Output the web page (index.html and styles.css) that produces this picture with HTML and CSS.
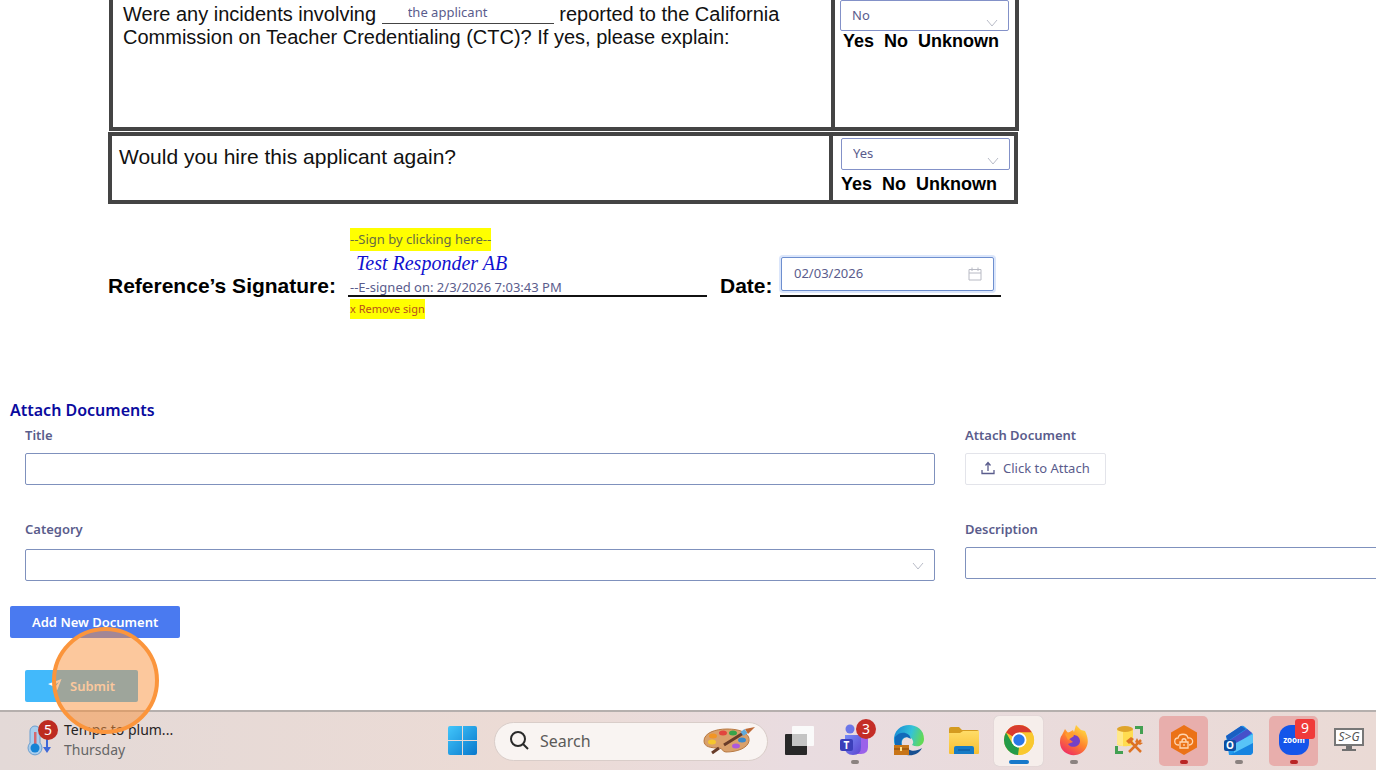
FILE: index.html
```html
<!DOCTYPE html>
<html lang="en">
<head>
<meta charset="utf-8">
<title>Reference Form</title>
<link rel="stylesheet" href="styles.css">
</head>
<body>
<main class="page">
  <section class="document">
    <div class="row row-first">
      <div class="question">
        <label for="who">Were any incidents involving</label>
        <input class="blank" id="who" type="text" value="the applicant">
        reported to the California<br>Commission on Teacher Credentialing (CTC)? If yes, please explain:
      </div>
      <div class="answer">
        <div class="select-wrap">
          <select class="control" aria-label="Incidents reported"><option>No</option><option>Yes</option><option>Unknown</option></select>
          <svg class="chevron chevron-low" viewBox="0 0 12 8"><path d="M1 1l5 6 5-6"/></svg>
        </div>
        <p class="choices"><span>Yes</span><span>No</span><span>Unknown</span></p>
      </div>
    </div>
    <div class="row row-second">
      <label class="question question-large" for="hire">Would you hire this applicant again?</label>
      <div class="answer">
        <div class="select-wrap">
          <select class="control" id="hire"><option>Yes</option><option>No</option><option>Unknown</option></select>
          <svg class="chevron chevron-low" viewBox="0 0 12 8"><path d="M1 1l5 6 5-6"/></svg>
        </div>
        <p class="choices"><span>Yes</span><span>No</span><span>Unknown</span></p>
      </div>
    </div>
    <div class="signing">
      <span class="sign-label">Reference’s Signature:</span>
      <div class="signature">
        <div class="signature-line">
          <button class="mark" type="button">--Sign by clicking here--</button>
          <span class="script">Test Responder AB</span>
          <span class="stamp">--E-signed on: 2/3/2026 7:03:43 PM</span>
        </div>
        <button class="mark mark-remove" type="button">x Remove sign</button>
      </div>
      <label class="sign-label date-label" for="date">Date:</label>
      <div class="date-line">
        <div class="date-box">
          <input id="date" class="date-input" type="text" value="02/03/2026">
          <svg class="calendar" viewBox="0 0 14 14"><path d="M1 2.500h12v10.500H1zM1 6h12M4 .5v3.500M10 .5v3.500"/></svg>
        </div>
      </div>
    </div>
  </section>

  <section class="attach">
    <h2 class="heading">Attach Documents</h2>
    <div class="fields">
      <div class="field">
        <label for="title">Title</label>
        <input class="control" id="title" type="text">
      </div>
      <div class="field">
        <label for="attach">Attach Document</label>
        <button class="upload" id="attach" type="button">
          <svg class="upload-icon" viewBox="0 0 14 14"><path d="M1 9v3.500h12V9M7 10V2M4.500 4.500L7 1.500l2.500 3"/></svg>Click to Attach
        </button>
      </div>
      <div class="field field-category">
        <label for="category">Category</label>
        <div class="select-wrap">
          <select class="control" id="category"><option></option></select>
          <svg class="chevron" viewBox="0 0 12 8"><path d="M1 1l5 6 5-6"/></svg>
        </div>
      </div>
      <div class="field">
        <label for="description">Description</label>
        <input class="control" id="description" type="text">
      </div>
    </div>
    <button class="button add" type="button">Add New Document</button>
    <div class="submit-wrap">
      <button class="button submit" type="submit">
        <svg class="send" viewBox="0 0 14 14"><path d="M13.500 0L0 5l4.500 2L11 3 7 8v6l2.500-3.500z" fill="#fff"/></svg>Submit
      </button>
      <span class="pointer"></span>
    </div>
  </section>
</main>

<footer class="taskbar">
  <button class="weather" type="button">
    <svg class="weather-icon" viewBox="0 0 32 40">
      <path d="M4 11a5 5 0 0 1 10 0v12a7 7 0 1 1-10 0z" fill="#a9cdec" stroke="#6b9fd0"/>
      <path d="M8 12h2.500v14H8z" fill="#d5686f"/><circle cx="9" cy="28" r="4.500" fill="#1583d5"/>
      <path d="M20 18v9h-3l4 6 4-6h-3v-9z" fill="#3e68d8"/>
      <circle cx="22" cy="10" r="10" fill="#bd2b20"/><text x="22" y="15" text-anchor="middle" font-size="14" fill="#fff">5</text>
    </svg>
    <span class="weather-text"><span>Temps to plum...</span><span class="weather-day">Thursday</span></span>
  </button>

  <div class="apps">
    <button class="app app-start" type="button" aria-label="Start">
      <svg viewBox="0 0 49 50"><defs><linearGradient id="win" x2="1" y2="1"><stop stop-color="#42c6fb"/><stop offset="1" stop-color="#0878cc"/></linearGradient></defs>
      <path d="M10 12q0-2 2-2h12v14H10zM25 10h12q2 0 2 2v12H25zM10 25h14v14H12q-2 0-2-2zM25 25h14v12q0 2-2 2H25z" fill="url(#win)"/></svg>
    </button>
    <label class="search">
      <svg class="search-icon" viewBox="0 0 20 20"><circle cx="9" cy="8" r="7"/><path d="M14 13l5 5"/></svg>
      <input class="search-input" type="text" placeholder="Search" aria-label="Search">
      <svg class="palette" viewBox="0 0 52 28">
        <path d="M1 14C1 6 12 2 24 2c13 0 23 4 22 12-1 7-12 11-23 11-4 0-3-4-7-4C8 21 1 20 1 14z" fill="#d9a06b" stroke="#b87942"/>
        <ellipse cx="20" cy="6" rx="4" ry="2.500" fill="#e2453e"/><ellipse cx="30" cy="6" rx="4" ry="2.500" fill="#37a34a"/><ellipse cx="10" cy="9" rx="4" ry="2.500" fill="#f29524"/><ellipse cx="9" cy="15" rx="4" ry="2.500" fill="#f6c62e"/><ellipse cx="39" cy="13" rx="4" ry="2.500" fill="#3989cc"/><ellipse cx="33" cy="19" rx="4" ry="2.500" fill="#ad58dc"/>
        <path d="M9 26l7-5M21 18L42 5" stroke="#693c29" stroke-width="3"/><path d="M39 7l4-3" stroke="#60a9db" stroke-width="5"/><path d="M42 2l10-2-7 7z" fill="#bd6935"/>
      </svg>
    </label>
    <button class="app" type="button" aria-label="Task view">
      <svg viewBox="0 0 49 50"><rect x="11" y="18" width="22" height="21" rx="1" fill="#282828"/><rect x="18" y="10" width="22" height="20" rx="1" fill="#fafafa"/><path d="M18 18h15v12H18z" fill="#c4c4c4"/></svg>
    </button>
    <button class="app" type="button" aria-label="Teams">
      <svg viewBox="0 0 49 50"><defs><linearGradient id="tm" x2="1" y2="1"><stop stop-color="#788cf6"/><stop offset="1" stop-color="#5a45d0"/></linearGradient></defs>
      <circle cx="21" cy="13" r="4.500" fill="#6b76e8"/><path d="M29 19h10v12q0 7-7 7h-5z" fill="#9b62ea"/><path d="M16 19h16v12q0 8-8 8t-8-8z" fill="url(#tm)"/>
      <rect x="11" y="23" width="13" height="12" rx="2" fill="#3c3fba"/><text x="17.500" y="33" text-anchor="middle" font-size="10" font-weight="700" fill="#fff">T</text>
      <circle cx="37" cy="13" r="10" fill="#c42d27"/><text x="37" y="18" text-anchor="middle" font-size="14" fill="#fff">3</text><rect x="22" y="44" width="8" height="4" rx="2" fill="#8b8280"/></svg>
    </button>
    <button class="app" type="button" aria-label="Edge">
      <svg viewBox="0 0 49 50"><defs><linearGradient id="ed" x2="1" y2=".3"><stop stop-color="#1585d5"/><stop offset=".6" stop-color="#34c2d8"/><stop offset="1" stop-color="#62d956"/></linearGradient></defs>
      <path d="M10 26C8 4 40 4 40 23c0 7-7 9-12 6 3-3 0-8-4-8-8 0-8 10-2 16-7-1-11-5-12-11z" fill="url(#ed)"/><path d="M11 21c5-7 15-5 16 2-8-5-12 2-8 9l-8-3z" fill="#1169b9"/><path d="M24 33c4 3 9 2 14-1-3 6-9 8-15 7z" fill="#174f91"/>
      <rect x="10" y="29" width="15" height="10" fill="#c87518"/><path d="M10 33h15" stroke="#834609"/><path d="M17 31v4" stroke="#ffe18b" stroke-width="2"/></svg>
    </button>
    <button class="app" type="button" aria-label="File Explorer">
      <svg viewBox="0 0 49 50"><defs><linearGradient id="fo" x2="0" y2="1"><stop stop-color="#ffdc68"/><stop offset="1" stop-color="#f7bf31"/></linearGradient></defs><path d="M10 13q0-2 2-2h8l3 3h15q2 0 2 2v3H10z" fill="#d49b20"/><path d="M10 17h11l3-2h16v22q0 1-1 1H11q-1 0-1-1z" fill="url(#fo)"/><path d="M15 38v-6q0-2 2-2h16q2 0 2 2v6z" fill="#167bc5"/><path d="M19 34h12" stroke="#0b5293"/></svg>
    </button>
    <button class="app app-active" type="button" aria-label="Chrome">
      <svg viewBox="0 0 49 50"><circle cx="25" cy="24" r="15" fill="#f9c82f"/><path d="M25 24L12 16.500A15 15 0 0 1 38 16.500H25z" fill="#d83b2e"/><path d="M12 16.500l6.500 11.250L25 31.500l-1 7.500A15 15 0 0 1 12 16.500z" fill="#249b49"/><path d="M38 16.500H25L31.500 28 25 39A15 15 0 0 0 38 16.500z" fill="#f9c82f"/><circle cx="25" cy="24" r="7.500" fill="#fff"/><circle cx="25" cy="24" r="5.700" fill="#2a78e8"/><rect x="15" y="44" width="20" height="4" rx="2" fill="#1678ca"/></svg>
    </button>
    <button class="app" type="button" aria-label="Firefox">
      <svg viewBox="0 0 49 50"><defs><linearGradient id="ff" x1=".8" x2=".2" y2="1"><stop stop-color="#ffe443"/><stop offset=".5" stop-color="#ff842c"/><stop offset="1" stop-color="#ee2668"/></linearGradient></defs><path d="M13 19l3-6 3 4 5-3 1 2 2-7 5 5 4 1c3 6 4 12 1 17-7 12-25 8-26-5 0-3 0-6 2-8z" fill="url(#ff)"/><path d="M19 22c2-5 12-4 12 3 0 6-9 8-12 3l5-2z" fill="#7541c8"/><path d="M16 18c3-3 8-1 9 2l-6 4z" fill="#ff9b30"/><rect x="21" y="44" width="8" height="4" rx="2" fill="#8b8280"/></svg>
    </button>
    <button class="app" type="button" aria-label="Database tools">
      <svg viewBox="0 0 49 50"><path d="M13 13v15c0 3 16 3 16 0V13z" fill="#ffdc50"/><path d="M13 13v15q2 2 6 2V13z" fill="#ffe98a"/><ellipse cx="21" cy="13" rx="8" ry="3" fill="#dfa42b"/><path d="M31 11.500h6.500V18M12.500 30v6.500H19" fill="none" stroke="#43a052" stroke-width="3"/><path d="M25 36l12-12M26 25l11 11" stroke="#dd7324" stroke-width="2.500"/><path d="M22 25l5-4 3 2-5 5zM33 22l2 4 4 1-3 2-5-3z" fill="#dd7324"/></svg>
    </button>
    <button class="app app-alert" type="button" aria-label="Secure access">
      <svg viewBox="0 0 49 50"><path d="M25 9l13 7.500v15L25 39l-13-7.500v-15z" fill="#eb7217"/><path d="M20 29c-6 0-5-7-1-7 1-5 9-5 10 0 6-1 6 7 1 7M21 26h8v6h-8zM23 26v-1c0-3 4-3 4 0v1M25 28v2" fill="none" stroke="#ffd6b1" stroke-width="1.300"/><rect x="21" y="44" width="8" height="4" rx="2" fill="#b92525"/></svg>
    </button>
    <button class="app" type="button" aria-label="Outlook">
      <svg viewBox="0 0 49 50"><path d="M12 20l15-10q2-1 4 1l8 7v17q0 4-4 4H15z" fill="#2399ed"/><path d="M12 20l15-10 5 3-18 12z" fill="#1b5fc2"/><path d="M16 24l17-11 5 4-18 13z" fill="#4651ca"/><path d="M20 28l19-10v14L20 39z" fill="#58c4f7"/><path d="M16 39l23-12v8q0 4-4 4z" fill="#1784e0"/><rect x="10" y="24" width="12" height="11" rx="2" fill="#0c4fa2"/><text x="16" y="33" text-anchor="middle" font-size="10" font-weight="700" fill="#fff">O</text><rect x="21" y="44" width="8" height="4" rx="2" fill="#8b8280"/></svg>
    </button>
    <button class="app app-alert" type="button" aria-label="Zoom">
      <svg viewBox="0 0 49 50"><rect x="10" y="9" width="30" height="30" rx="12" fill="#1455ea"/><text x="25" y="27" text-anchor="middle" font-size="8" font-weight="700" fill="#fff">zoom</text><rect x="26" y="3" width="20" height="20" rx="3" fill="#f03a3a"/><text x="36" y="17" text-anchor="middle" font-size="14" fill="#fff">9</text><rect x="21" y="44" width="8" height="4" rx="2" fill="#b92525"/></svg>
    </button>
    <button class="app" type="button" aria-label="Screen tool">
      <svg viewBox="0 0 49 50"><rect x="11" y="13" width="28" height="16" fill="#fff" stroke="#777" stroke-width="2"/><path d="M22 30h6v3h4v2H18v-2h4z" fill="#707070"/><text x="25" y="25" text-anchor="middle" font-size="12" font-style="italic" fill="#555">S&gt;G</text></svg>
    </button>
  </div>
</footer>
</body>
</html>
```
FILE: styles.css
```css
* { box-sizing: border-box; }
body {
  margin: 0;
  height: 100vh;
  display: flex;
  flex-direction: column;
  overflow: hidden;
  background: #fff;
  color: #5a5c8c;
  font: 13px/20px "Noto Sans", sans-serif;
}
button, input, select { font: inherit; color: inherit; margin: 0; }
button { border: 0; padding: 0; background: none; }
svg { display: block; flex: none; }
.page { flex: 1; min-height: 0; }

/* Scanned form */
.document { max-width: 1020px; padding-left: 108px; color: #111; font-family: "Liberation Sans", Arial, sans-serif; }
.row { display: grid; border: 4px solid #444; }
.row-first { grid-template-columns: minmax(0, 1fr) 184px; margin: 0 1px; border-top: 0; min-height: 131px; }
.row-second { grid-template-columns: minmax(0, 1fr) 185px; margin: 1px 2px 0 0; min-height: 72px; }
.question { padding: 3px 10px; font-size: 20px; line-height: 23px; }
.question-large { padding: 9px 7px; font-size: 21px; line-height: 24px; }
.answer { border-left: 4px solid #444; padding: 0 6px 0 5px; }
.row-second .answer { padding: 2px 4px 0 8px; }
.row-second .choices { margin-top: 4px; margin-left: 0; }
.blank {
  width: 172px;
  height: 21px;
  padding: 0 0 3px 26px;
  border: 0;
  border-bottom: 1px solid #444;
  background: none;
  color: #5a5c8c;
  font: 13px/17px "Noto Sans", sans-serif;
  vertical-align: top;
}
.choices { display: flex; gap: 10px; margin: 0 0 0 3px; color: #000; font-size: 18px; font-weight: 700; line-height: 20px; }

.signing { display: flex; align-items: flex-start; padding-top: 24px; }
.sign-label { width: 240px; padding-top: 46px; color: #000; font-size: 21px; font-weight: 700; line-height: 24px; }
.date-label { width: 60px; margin-left: 13px; }
.signature { flex: 1; color: #5a5c8c; font: 13px/20px "Noto Sans", sans-serif; }
.signature-line { display: flex; flex-direction: column; align-items: flex-start; height: 69px; padding-left: 2px; border-bottom: 2px solid #111; }
.mark { background: #ff0; color: #666b45; line-height: 23px; }
.mark-remove { display: block; margin: 2px 0 0 2px; color: #b8501c; font-size: 11px; line-height: 20px; }
.script { padding-left: 6px; color: #1010d0; font: italic 20px/24px "Liberation Serif", serif; }
.stamp { line-height: 24px; }
.date-line { width: 221px; height: 69px; margin-right: 19px; padding: 29px 0 0 1px; border-bottom: 2px solid #111; }
.date-box { position: relative; width: 213px; }
.date-input { width: 100%; height: 34px; padding: 0 12px 2px; border: 1px solid #6e8fcf; border-radius: 2px; box-shadow: 0 0 0 2px #dbe6fb; color: #5a5c8c; font: 13px/20px "Noto Sans", sans-serif; }
.calendar { position: absolute; right: 12px; top: 10px; width: 14px; height: 14px; fill: none; stroke: #b8bac4; }

/* Controls */
.control { display: block; width: 100%; height: 32px; padding: 0 11px; border: 1px solid #7f91bd; border-radius: 2px; background: #fff; color: #5a5c8c; font: 13px/20px "Noto Sans", sans-serif; appearance: none; }
.select-wrap { position: relative; }
.row .control { padding-bottom: 2px; border-color: #8391c8; }
.row-first .control { height: 31px; }
.chevron { position: absolute; right: 11px; top: 13px; width: 12px; height: 8px; fill: none; stroke: #b9bcc8; }
.chevron-low { top: 19px; }

.attach { padding: 79px 0 0 10px; }
.heading { margin: 0; color: #0a0a9e; font-size: 16px; font-weight: 600; line-height: 24px; }
.fields { display: grid; grid-template-columns: repeat(2, calc(100% - 441px)); gap: 34px 30px; padding: 3px 0 0 15px; }
.field label { display: block; margin-bottom: 8px; font-weight: 600; line-height: 20px; }
.field-category label { margin-bottom: 10px; }
.upload { display: flex; align-items: center; gap: 8px; height: 32px; padding: 0 15px 2px; border: 1px solid #e3e4ea; border-radius: 2px; }
.upload-icon { width: 14px; height: 14px; fill: none; stroke: #5a5c8c; stroke-width: 1.3; }
.button { display: block; height: 32px; border-radius: 2px; color: #fff; font-weight: 600; }
.add { margin-top: 25px; padding: 0 22px; background: #4a7af0; }
.submit-wrap { position: relative; z-index: 2; padding: 32px 0 0 15px; }
.submit { display: flex; align-items: center; gap: 8px; padding: 0 23px; background: #42b9fb; }
.send { width: 14px; height: 14px; }
.pointer { position: absolute; left: 42px; top: -11px; width: 107px; height: 107px; border: 4px solid #fb953c; border-radius: 50%; background: rgba(250, 145, 60, .5); pointer-events: none; }

/* Taskbar */
.taskbar { display: flex; align-items: center; flex: none; height: 60px; padding: 0 3px 0 26px; border-top: 2px solid #b5afad; background: linear-gradient(90deg, #e3d9d7, #ecdbd5 38%, #e9dce0 58%, #eadad5); }
.weather { display: flex; align-items: center; gap: 6px; padding-bottom: 2px; color: #252323; text-align: left; font-size: 14px; }
.weather-icon { width: 32px; height: 40px; }
.weather-text { display: flex; flex-direction: column; }
.weather-day { color: #666; }
.apps { display: flex; align-items: center; gap: 6px; margin-left: auto; }
.app { width: 49px; height: 50px; border-radius: 5px; }
.app svg { width: 49px; height: 50px; }
.app-start { margin-right: 1px; }
.app-active { background: #f6eeeb; box-shadow: 0 0 1px #bbb; }
.app-alert { background: #e8aeac; }
.search { display: flex; align-items: center; width: 274px; height: 39px; padding: 0 12px 0 14px; border: 1px solid #d9cdc9; border-radius: 20px; background: #f9f4f2; }
.search-icon { width: 20px; height: 20px; fill: none; stroke: #292929; stroke-width: 2; }
.search-input { flex: 1; min-width: 0; padding: 0 0 0 11px; border: 0; background: none; font-size: 16px; }
.search-input::placeholder { color: #5c5a59; opacity: 1; }
.palette { width: 52px; height: 28px; }
```
